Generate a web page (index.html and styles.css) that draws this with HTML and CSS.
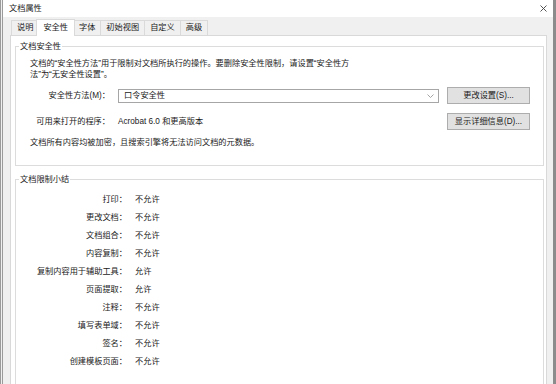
FILE: index.html
```html
<!DOCTYPE html>
<html lang="zh-CN">
<head>
<meta charset="UTF-8">
<meta name="viewport" content="width=device-width, initial-scale=1.0">
<title>文档属性</title>
<link rel="stylesheet" href="styles.css">
</head>
<body>

<div class="window">
  <div class="titlebar">
    <span class="title">文档属性</span>
    <svg class="close" width="7" height="7" viewBox="0 0 7 7">
      <path d="M0.5 0.5 L6.5 6.5 M6.5 0.5 L0.5 6.5" stroke="#444" stroke-width="0.9" fill="none"/>
    </svg>
  </div>

  <div class="tabs">
    <div class="tab">说明</div>
    <div class="tab active">安全性</div>
    <div class="tab">字体</div>
    <div class="tab">初始视图</div>
    <div class="tab">自定义</div>
    <div class="tab">高级</div>
  </div>

  <div class="panel">
    <fieldset class="group">
      <legend>文档安全性</legend>
      <p class="intro">文档的“安全性方法”用于限制对文档所执行的操作。要删除安全性限制，请设置“安全性方<br>法”为“无安全性设置”。</p>

      <div class="form-grid">
        <label for="method">安全性方法(M)：</label>
        <div class="select" id="method">
          <span>口令安全性</span>
          <svg width="7" height="4" viewBox="0 0 7 4">
            <polyline points="0.5,0.5 3.5,3.5 6.5,0.5" stroke="#9a9a9a" stroke-width="0.9" fill="none"/>
          </svg>
        </div>
        <button type="button">更改设置(S)...</button>

        <label>可用来打开的程序：</label>
        <span>Acrobat 6.0 和更高版本</span>
        <button type="button">显示详细信息(D)...</button>
      </div>

      <p class="note">文档所有内容均被加密，且搜索引擎将无法访问文档的元数据。</p>
    </fieldset>

    <fieldset class="group summary-group">
      <legend>文档限制小结</legend>
      <dl class="summary">
        <dt>打印：</dt><dd>不允许</dd>
        <dt>更改文档：</dt><dd>不允许</dd>
        <dt>文档组合：</dt><dd>不允许</dd>
        <dt>内容复制：</dt><dd>不允许</dd>
        <dt>复制内容用于辅助工具：</dt><dd>允许</dd>
        <dt>页面提取：</dt><dd>允许</dd>
        <dt>注释：</dt><dd>不允许</dd>
        <dt>填写表单域：</dt><dd>不允许</dd>
        <dt>签名：</dt><dd>不允许</dd>
        <dt>创建模板页面：</dt><dd>不允许</dd>
      </dl>
    </fieldset>
  </div>
</div>

</body>
</html>
```

FILE: styles.css
```css
body {
  margin: 0;
  font-family: "Liberation Sans", "Noto Sans CJK SC", sans-serif;
  font-size: 8.2px;
  line-height: 11px;
  color: #1a1a1a;
}

.window {
  width: 556px;
  height: 384px;
  box-sizing: border-box;
  border-left: 3px double #9b9b9b;
  border-right: 3px solid #8c8c8c;
  background-color: #f0f0f0;
  overflow: hidden;
  display: flex;
  flex-direction: column;
}

.titlebar {
  height: 17px;
  flex-shrink: 0;
  background-color: #ffffff;
  display: flex;
  align-items: center;
  justify-content: space-between;
  padding: 0 6px;
}

.tabs {
  height: 18px;
  flex-shrink: 0;
  display: flex;
  align-items: flex-end;
  padding-left: 8px;
}

.tab {
  height: 14px;
  line-height: 14px;
  padding: 0 5px;
  border: 1px solid #dadada;
  border-bottom: none;
  margin-right: -1px;
  background-color: #f0f0f0;
}

.tab.active {
  height: 16px;
  line-height: 15px;
  margin: 0 -2px -1px -2px;
  padding: 0 6px;
  background-color: #ffffff;
  position: relative;
  z-index: 1;
}

.panel {
  flex: 1;
  margin: 0 6px 0 7px;
  border: 1px solid #d9d9d9;
  background-color: #ffffff;
  padding: 0 2px 0 4px;
}

.group {
  margin: 5px 0 0;
  border: 1px solid #dcdcdc;
  padding: 0 13px 17px 14px;
}

.group legend {
  margin-left: -11px;
  padding: 0 1px;
}

.intro {
  margin: 6px 0 0;
}

.form-grid {
  display: grid;
  grid-template-columns: 80px 1fr 83px;
  column-gap: 8px;
  row-gap: 9px;
  align-items: center;
  margin-top: 7px;
}

.form-grid label {
  text-align: right;
}

.select {
  height: 14px;
  box-sizing: border-box;
  border: 1px solid #a6a6a6;
  display: flex;
  align-items: center;
  justify-content: space-between;
  padding: 0 4px 0 5px;
}

.form-grid button {
  height: 17px;
  padding: 0;
  font: inherit;
  color: #1a1a1a;
  background-color: #e1e1e1;
  border: 1px solid #adadad;
}

.note {
  margin: 7px 0 0;
}

.summary-group {
  margin-top: 8px;
  height: 260px;
}

.summary {
  display: grid;
  grid-template-columns: 97px 1fr;
  column-gap: 8px;
  grid-auto-rows: 18px;
  align-items: center;
  margin: 5px 0 0;
}

.summary dt {
  text-align: right;
}

.summary dd {
  margin: 0;
}
```
